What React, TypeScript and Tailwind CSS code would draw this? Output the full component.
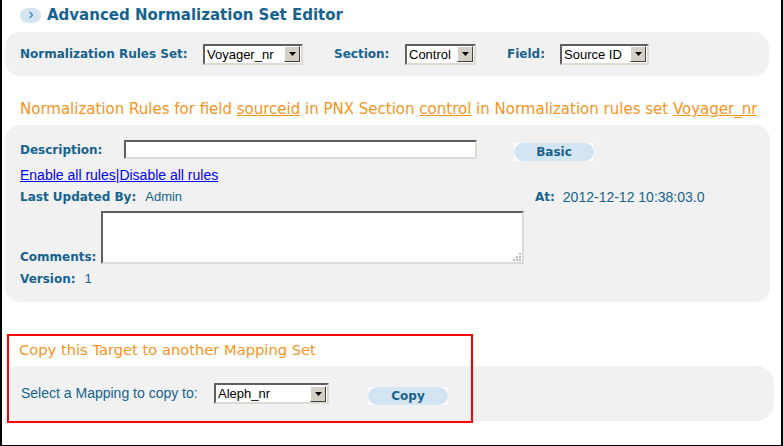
import React from "react";

const blue = "text-[#16638f]";

function Select({ value, width }: { value: string; width: number }) {
  return (
    <div
      className="flex h-[21px] items-center justify-between border-2 border-t-[#5f5f5f] border-l-[#5f5f5f] border-r-[#dedbd4] border-b-[#dedbd4] bg-white pl-[2px] pr-[1px] font-['Liberation_Sans',Arial,sans-serif] text-[13px] leading-none text-black"
      style={{ width }}
    >
      <span>{value}</span>
      <span className="flex h-[16px] w-[16px] items-center justify-center border border-t-white border-l-white border-r-[#404040] border-b-[#404040] bg-[#d4d0c8]">
        <svg width="7" height="4" viewBox="0 0 7 4">
          <path d="M0 0h7L3.5 4z" fill="#000" />
        </svg>
      </span>
    </div>
  );
}

function PillButton({ label, width }: { label: string; width: number }) {
  return (
    <div className="flex h-[18px] bg-white" style={{ width }}>
      <div className="flex h-full w-full items-center justify-center rounded-full bg-[#d3e5f2] font-['DejaVu_Sans',Verdana,sans-serif] text-[12px] font-bold text-[#16638f]">
        {label}
      </div>
    </div>
  );
}

const label = `font-['DejaVu_Sans',Verdana,sans-serif] text-[12px] font-bold ${blue}`;
const value = `font-['Liberation_Sans',Arial,sans-serif] text-[13px] ${blue}`;

export default function App() {
  return (
    <div className="relative h-[446px] w-[783px] overflow-hidden border-b border-l-2 border-r-2 border-black bg-white font-['Liberation_Sans',Arial,sans-serif]">
      {/* title */}
      <div className="flex h-[32px] items-center gap-[6px] pb-[2px] pl-[18px]">
        <span className="flex h-[15px] w-[21px] items-center justify-center rounded-full bg-[#d3e5f2]">
          <svg width="6" height="8" viewBox="0 0 6 8">
            <path d="M1.5 1l3 3-3 3" fill="none" stroke="#3d86bd" strokeWidth="1.3" />
          </svg>
        </span>
        <h1 className="font-['DejaVu_Sans',Verdana,sans-serif] text-[15px] font-bold leading-[20px] text-[#16638f]">
          Advanced Normalization Set Editor
        </h1>
      </div>

      {/* rules set chooser */}
      <div className="ml-[3px] flex h-[44px] w-[764px] items-center rounded-[15px] bg-[#f1f1f1] pl-[15px]">
        <span className={`${label} w-[183px]`}>Normalization Rules Set:</span>
        <Select value="Voyager_nr" width={100} />
        <span className={`${label} ml-[31px] w-[71px]`}>Section:</span>
        <Select value="Control" width={71} />
        <span className={`${label} ml-[31px] w-[53px]`}>Field:</span>
        <Select value="Source ID" width={89} />
      </div>

      {/* heading */}
      <div className="pl-[18px] pt-[23px] pb-[6px] font-['DejaVu_Sans',Verdana,sans-serif] text-[15px] leading-[20px] text-[#f7941d]">
        Normalization Rules for field <span className="underline">sourceid</span> in PNX Section{" "}
        <span className="underline">control</span> in Normalization rules set{" "}
        <span className="underline">Voyager_nr</span>
      </div>

      {/* rule set details */}
      <div className="ml-[3px] h-[177px] w-[765px] rounded-[15px] bg-[#f1f1f1] pl-[15px] pt-[15px]">
        <div className="flex h-[19px] items-center">
          <span className={`${label} w-[104px]`}>Description:</span>
          <div className="h-[19px] w-[353px] border-2 border-t-[#5f5f5f] border-l-[#5f5f5f] border-r-[#dedbd4] border-b-[#dedbd4] bg-white" />
          <div className="ml-[37px] mt-[5px]">
            <PillButton label="Basic" width={80} />
          </div>
        </div>
        <div className="mt-[8px] text-[14px] leading-[16px] text-[#0000ff]">
          <span className="underline">Enable all rules</span>|<span className="underline">Disable all rules</span>
        </div>
        <div className="mt-[6px] flex h-[16px] items-center">
          <div className="flex w-[515px] items-center gap-[9px]">
            <span className={label}>Last Updated By:</span>
            <span className={value}>Admin</span>
          </div>
          <span className={label}>At:</span>
          <span className={`${value} ml-[8px] text-[14px]`}>2012-12-12 10:38:03.0</span>
        </div>
        <div className="mt-[6px] flex items-end">
          <span className={`${label} w-[81px] leading-[14px]`}>Comments:</span>
          <div className="relative h-[53px] w-[423px] border-2 border-t-[#5f5f5f] border-l-[#5f5f5f] border-r-[#dedbd4] border-b-[#dedbd4] bg-white">
            <svg className="absolute bottom-[1px] right-[1px]" width="9" height="9" viewBox="0 0 9 9">
              <g fill="#bdbdbd">
                <rect x="7" y="1" width="2" height="2" />
                <rect x="4" y="4" width="2" height="2" />
                <rect x="7" y="4" width="2" height="2" />
                <rect x="1" y="7" width="2" height="2" />
                <rect x="4" y="7" width="2" height="2" />
                <rect x="7" y="7" width="2" height="2" />
              </g>
            </svg>
          </div>
        </div>
        <div className="mt-[7px] flex h-[16px] items-center gap-[9px]">
          <span className={label}>Version:</span>
          <span className={value}>1</span>
        </div>
      </div>

      {/* copy target */}
      <div className="mt-[38px] pl-[17px] font-['DejaVu_Sans',Verdana,sans-serif] text-[14.7px] leading-[20px] text-[#f7941d]">
        Copy this Target to another Mapping Set
      </div>
      <div className="ml-[8px] mt-[6px] flex h-[55px] w-[764px] items-center rounded-l-[6px] rounded-r-[18px] bg-[#f1f1f1] pl-[11px]">
        <span className={`${value} w-[193px] text-[14px]`}>Select a Mapping to copy to:</span>
        <Select value="Aleph_nr" width={115} />
        <div className="ml-[39px] mt-[5px]">
          <PillButton label="Copy" width={80} />
        </div>
      </div>

      {/* highlight */}
      <div className="pointer-events-none absolute left-[5px] top-[334px] h-[89px] w-[466px] border-2 border-[#ff0000]" />
    </div>
  );
}
